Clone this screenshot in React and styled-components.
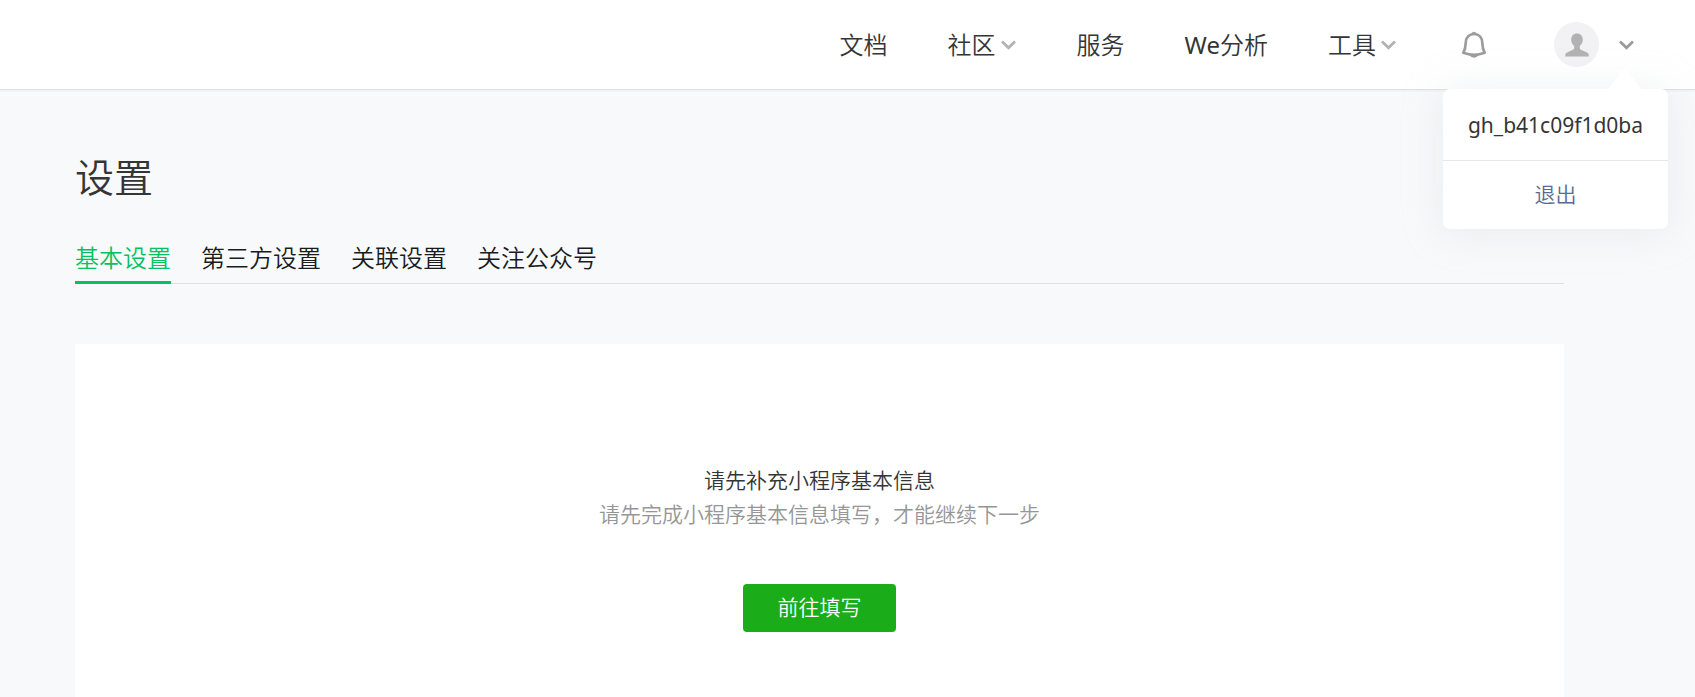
import React from "react";
import styled, { createGlobalStyle } from "styled-components";

const GlobalStyle = createGlobalStyle`
  *, *::before, *::after { box-sizing: border-box; }
  body {
    margin: 0;
    background: #f8f9fb;
    color: #353535;
    font-family: "Noto Sans", "Noto Sans CJK SC", sans-serif;
    font-size: 21px;
    font-weight: 350;
    line-height: 34px;
  }
  a { color: inherit; text-decoration: none; }
  button { font: inherit; color: inherit; border: 0; padding: 0; background: none; cursor: pointer; }
  h1, p { margin: 0; font-weight: inherit; }
`;

const Page = styled.div`
  min-height: 100vh;
  display: flex;
  flex-direction: column;
`;

const Header = styled.header`
  height: 90px;
  display: flex;
  align-items: center;
  justify-content: flex-end;
  padding-right: 60px;
  background: #fff;
  border-bottom: 1px solid #e0e1e2;
  box-shadow: 0 1px 2px rgba(0, 0, 0, 0.05);
`;

const Nav = styled.nav`
  display: flex;
  gap: 60px;
  margin-right: 64px;
  font-size: 24px;
`;

const NavItem = styled.a`
  display: flex;
  align-items: center;
`;

const NavMenuIcon = styled.span`
  display: flex;
  margin-left: 4px;
`;

const Latin = styled.span`
  font-weight: 400;
`;

const IconButton = styled.button`
  display: flex;
  align-items: center;
`;

const Account = styled.div`
  position: relative;
  display: flex;
  align-items: center;
  gap: 19px;
  margin-left: 67px;
`;

const Avatar = styled.span`
  width: 45px;
  height: 45px;
  display: flex;
  align-items: center;
  justify-content: center;
  border-radius: 50%;
  background: #f2f2f5;
`;

const Popover = styled.div`
  position: absolute;
  z-index: 1;
  top: 67px;
  right: -33px;
  width: 225px;
  border-radius: 7px;
  background: #fff;
  box-shadow: 0 2px 38px rgba(204, 212, 218, 0.38);
  text-align: center;
`;

const PopoverArrow = styled.svg`
  position: absolute;
  right: 26px;
  bottom: 100%;
  display: block;
`;

const AccountName = styled.p`
  padding: 19px 0 18px;
  border-bottom: 1px solid #e4e8eb;
  font-weight: 400;
`;

const Logout = styled.a`
  display: block;
  padding: 16px 0 18px;
  color: #576b95;
`;

const Main = styled.main`
  flex: 1;
  display: flex;
  flex-direction: column;
  padding: 59px 131px 0 75px;
`;

const Title = styled.h1`
  font-size: 39px;
  line-height: 56px;
`;

const Tabs = styled.nav`
  display: flex;
  gap: 30px;
  margin: 31px 0 60px;
  border-bottom: 1px solid #e0e1e3;
  font-size: 24px;
`;

const Tab = styled.a`
  height: 48px;
  margin-bottom: -1px;
  padding-top: 5px;
  border-bottom: 3px solid ${(p) => (p.$active ? "#07c160" : "transparent")};
  color: ${(p) => (p.$active ? "#07c160" : "#1a1b1c")};
`;

const Card = styled.section`
  flex: 1;
  display: flex;
  flex-direction: column;
  align-items: center;
  padding: 119px 30px 60px;
  background: #fff;
`;

const Hint = styled.p`
  color: #969696;
`;

const PrimaryButton = styled.button`
  width: 153px;
  height: 48px;
  margin-top: 53px;
  padding-bottom: 2px;
  border-radius: 4px;
  background: #1aad19;
  color: #fff;
`;

const Chevron = ({ color = "#b2b2b2" }) => (
  <svg width="17" height="12" viewBox="0 0 17 12" fill="none" stroke={color} strokeWidth="2.8" aria-hidden="true">
    <path d="M2 2.500 8.500 8.700 15 2.500" />
  </svg>
);

const Bell = () => (
  <svg width="26" height="28" viewBox="0 0 26 28" aria-hidden="true">
    <path d="M13 3C8 3 4.900 6.500 4.700 12C4.600 16 4.300 18.500 2.300 21.800Q13 25.800 23.700 21.800C21.700 18.500 21.400 16 21.300 12C21.100 6.500 18 3 13 3Z" fill="none" stroke="#9c9c9c" strokeWidth="2.700" strokeLinejoin="round" />
    <path d="M10 2.800Q13-1.200 16 2.800ZM8 24Q13 29.500 18 24Z" fill="#9c9c9c" />
  </svg>
);

const Person = () => (
  <svg width="24" height="24" viewBox="0 0 24 24" fill="#b2b2b2" aria-hidden="true">
    <path d="M12 .5C8.300.5 6.200 3 6.200 6.800C6.200 9.500 7.500 11.500 9.200 13V15.200C9.200 16 8.500 16.500 7.500 17L2 19.600C.8 20.200.3 21 .3 22V23.500H23.700V22C23.700 21 23.200 20.200 22 19.600L16.500 17C15.500 16.500 14.800 16 14.800 15.200V13C16.500 11.500 17.800 9.500 17.800 6.800C17.800 3 15.700.5 12 .5Z" />
  </svg>
);

const navItems = [
  { id: "docs", label: "文档" },
  { id: "community", label: "社区", menu: true },
  { id: "service", label: "服务" },
  { id: "analysis", label: <span><Latin>We</Latin>分析</span> },
  { id: "tools", label: "工具", menu: true },
];

const tabs = ["基本设置", "第三方设置", "关联设置", "关注公众号"];

export default function App() {
  return (
    <Page lang="zh-CN">
      <GlobalStyle />
      <Header>
        <Nav>
          {navItems.map((item) => (
            <NavItem href="#" key={item.id}>
              {item.label}
              {item.menu && (
                <NavMenuIcon>
                  <Chevron />
                </NavMenuIcon>
              )}
            </NavItem>
          ))}
        </Nav>
        <IconButton aria-label="通知">
          <Bell />
        </IconButton>
        <Account>
          <Avatar>
            <Person />
          </Avatar>
          <IconButton aria-label="账号菜单" aria-expanded="true">
            <Chevron color="#9a9a9a" />
          </IconButton>
          <Popover>
            <PopoverArrow width="34" height="21" viewBox="0 0 34 21" fill="#fff" aria-hidden="true">
              <path d="M0 21 17 0 34 21Z" />
            </PopoverArrow>
            <AccountName>gh_b41c09f1d0ba</AccountName>
            <Logout href="#">退出</Logout>
          </Popover>
        </Account>
      </Header>
      <Main>
        <Title>设置</Title>
        <Tabs>
          {tabs.map((label, i) => (
            <Tab href="#" key={label} $active={i === 0} aria-current={i === 0 ? "page" : undefined}>
              {label}
            </Tab>
          ))}
        </Tabs>
        <Card>
          <p>请先补充小程序基本信息</p>
          <Hint>请先完成小程序基本信息填写，才能继续下一步</Hint>
          <PrimaryButton>前往填写</PrimaryButton>
        </Card>
      </Main>
    </Page>
  );
}
